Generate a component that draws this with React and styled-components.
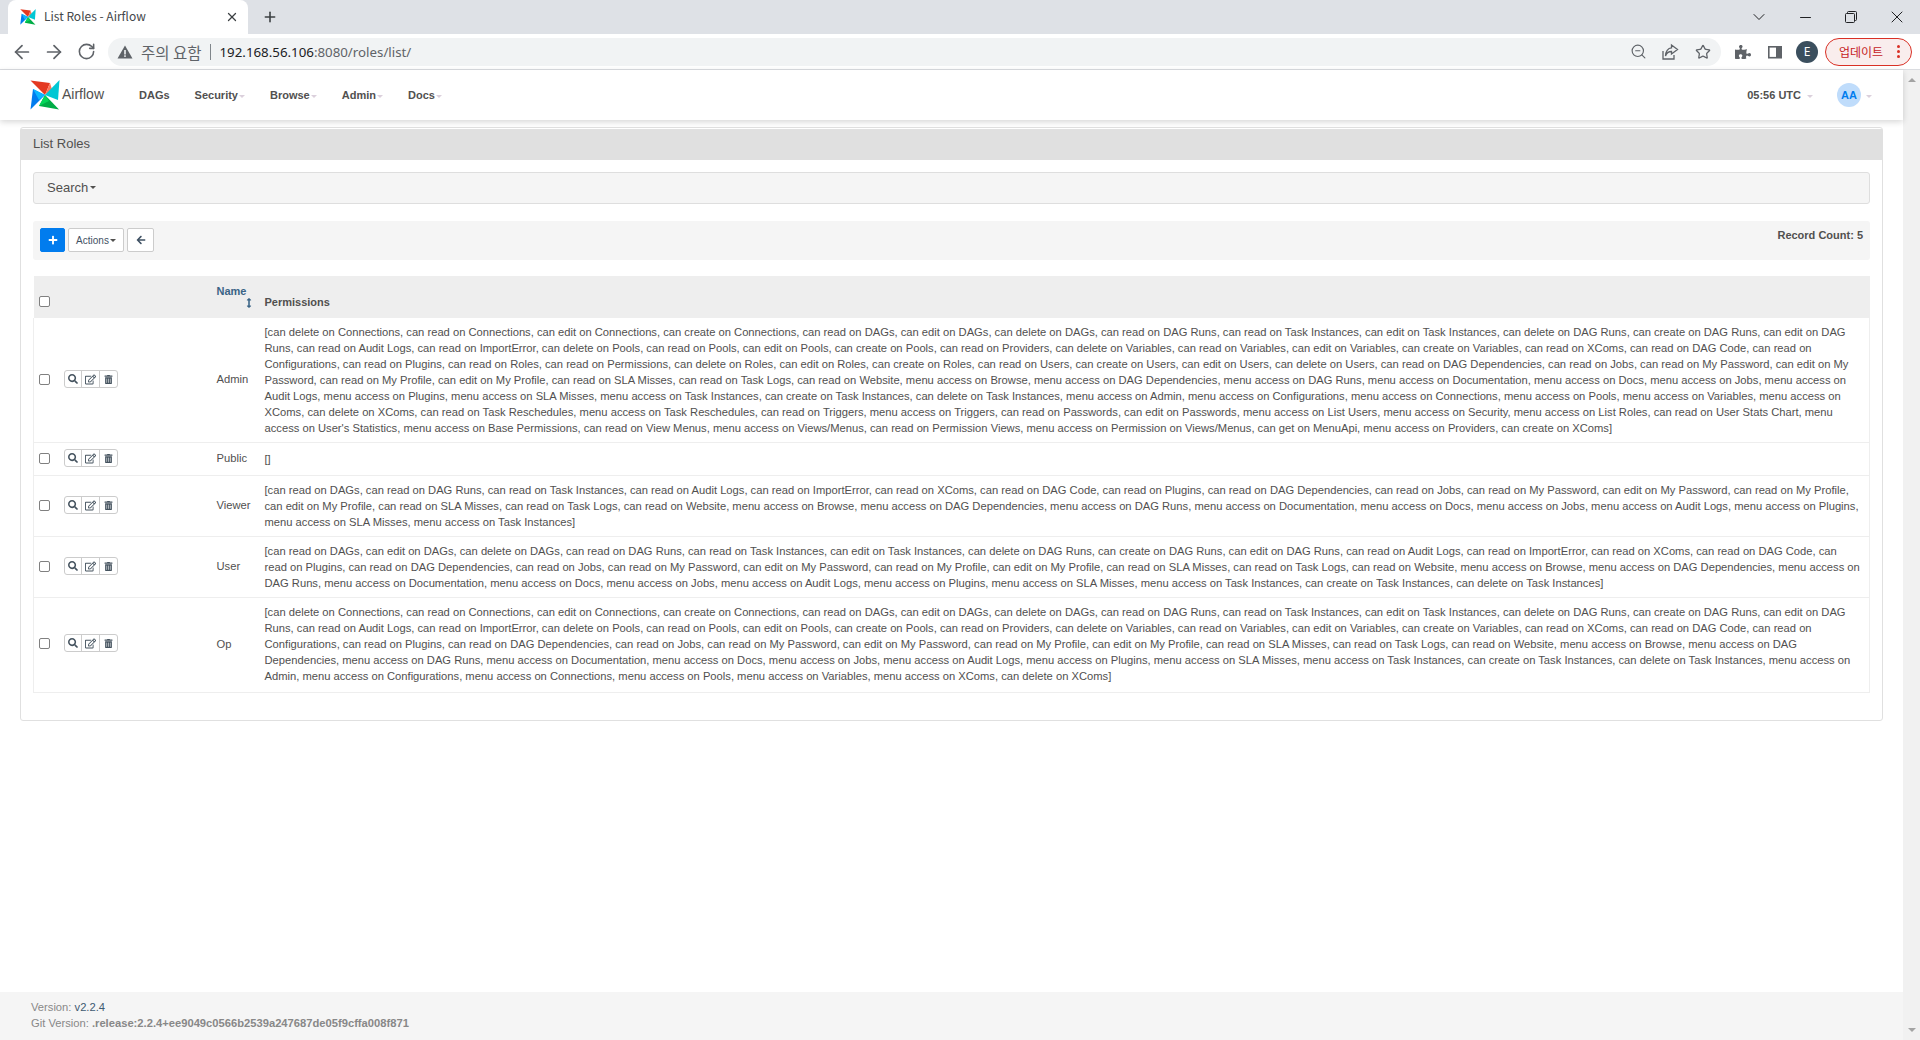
import React from "react";
import styled, { createGlobalStyle } from "styled-components";
import { ArrowLeft, ArrowRight, RotateCw, Star, ZoomOut, Plus, X, ChevronDown, Minus } from "lucide-react";
import { FaSearch, FaRegEdit, FaTrashAlt, FaPlus, FaArrowLeft, FaPuzzlePiece, FaArrowsAltV } from "react-icons/fa";

const Global = createGlobalStyle`
  html, body { margin: 0; padding: 0; height: 100%; background: #fff; overflow: hidden; }
  body { font-family: "Liberation Sans", Arial, sans-serif; color: #51504f; }
  * { box-sizing: border-box; }
`;

const Shell = styled.div`display:flex;flex-direction:column;width:1920px;height:1040px;overflow:hidden;`;
const TabStrip = styled.div`display:flex;align-items:stretch;height:34px;background:#dee1e6;padding-left:8px;flex:none;`;
const Tab = styled.div`display:flex;align-items:center;width:240px;background:#fff;border-radius:8px 8px 0 0;padding:0 9px 0 12px;`;
const TabTitle = styled.span`flex:1;margin:0 0 3px 8px;font:12px "Noto Sans CJK KR","Liberation Sans",sans-serif;color:#45474a;white-space:nowrap;`;
const NewTab = styled.div`display:flex;align-items:center;justify-content:center;width:28px;margin-left:8px;color:#3c4043;`;
const StripSpacer = styled.div`flex:1;`;
const WinBtn = styled.div`display:flex;align-items:center;justify-content:center;width:46px;color:#202124;`;

const Toolbar = styled.div`display:flex;align-items:center;height:36px;background:#fff;border-bottom:1px solid #dadce0;padding-left:6px;flex:none;`;
const ToolSlot = styled.div`display:flex;align-items:center;justify-content:center;width:${p => p.$w || 32}px;height:28px;margin-left:${p => p.$gap || 0}px;color:${p => p.$c || "#5f6368"};flex:none;`;
const Omnibox = styled.div`display:flex;align-items:center;flex:none;width:1613px;height:28px;margin-left:6px;background:#f1f3f4;border-radius:14px;padding:0 2px 0 9px;`;
const WarnText = styled.span`margin-left:8px;font:15.5px "Noto Sans CJK KR",sans-serif;color:#5f6368;white-space:nowrap;`;
const UrlSep = styled.span`width:1px;height:16px;background:#80868b;margin:0 9px 0 8px;`;
const Url = styled.span`flex:1;font:13.3px "Noto Sans","Liberation Sans",sans-serif;color:#5f6368;white-space:nowrap;b{font-weight:400;color:#202124;}`;
const ProfileDot = styled.div`display:flex;align-items:center;justify-content:center;width:22px;height:22px;border-radius:50%;background:#3b4f5e;color:#fff;font:12px "Noto Sans",sans-serif;`;
const UpdatePill = styled.div`display:flex;align-items:center;justify-content:space-between;width:87px;height:28px;margin-left:2px;border:1px solid #d93025;border-radius:14px;background:#f9eded;padding:0 11px 0 13px;font:12px "Noto Sans CJK KR",sans-serif;color:#c5221f;`;
const Dots = styled.span`display:flex;flex-direction:column;gap:2px;i{display:block;width:3px;height:3px;border-radius:50%;background:#d93025;}`;

const Viewport = styled.div`display:flex;flex:1;min-height:0;`;
const Page = styled.div`display:flex;flex-direction:column;flex:1;min-width:0;`;
const ScrollBar = styled.div`display:flex;flex-direction:column;justify-content:space-between;align-items:center;width:17px;background:#f1f1f1;padding:8px 0;flex:none;`;
const ScrollArrow = styled.span`width:0;height:0;border-left:4px solid transparent;border-right:4px solid transparent;${p => p.$down ? "border-top:4px solid #a3a3a3;" : "border-bottom:4px solid #a3a3a3;"}`;

const Navbar = styled.nav`display:flex;align-items:center;height:50px;padding:0 31px 0 30px;background:#fff;box-shadow:0 2px 6px rgba(0,0,0,.16);flex:none;position:relative;`;
const Brand = styled.div`display:flex;align-items:center;width:109px;flex:none;`;
const BrandName = styled.span`font-size:14px;color:#51504f;margin-left:2px;margin-bottom:2px;`;
const NavList = styled.div`display:flex;align-items:center;gap:25px;flex:1;`;
const NavItem = styled.span`display:flex;align-items:center;gap:1px;font-size:11px;font-weight:700;color:#51504f;`;
const Caret = styled.span`width:0;height:0;border-left:3px solid transparent;border-right:3px solid transparent;border-top:3px solid ${p => p.$c || "#dbd0dc"};margin-top:2px;`;
const Clock = styled.span`display:flex;align-items:center;gap:6px;font-size:11px;font-weight:700;color:#51504f;margin-right:24px;`;
const Avatar = styled.span`display:flex;align-items:center;justify-content:center;width:24px;height:24px;border-radius:50%;background:#bfdcfb;color:#017cee;font-size:11px;font-weight:700;margin-right:5px;`;

const Panel = styled.section`margin:7px 20px 0;height:594px;border:1px solid #e0e0e0;border-radius:3px;flex:none;`;
const PanelHead = styled.h1`margin:1px 0 0;height:31px;display:flex;align-items:center;padding:0 0 2px 12px;background:#e0e0e0;font-size:13px;font-weight:400;color:#51504f;`;
const PanelBody = styled.div`padding:12px 12px 0;`;
const SearchBar = styled.div`display:flex;align-items:center;gap:2px;height:32px;border:1px solid #dedede;border-radius:3px;background:#f5f5f5;padding:0 0 2px 13px;font-size:13px;color:#51504f;`;
const ActionBar = styled.div`display:flex;align-items:flex-start;justify-content:space-between;height:39px;margin-top:17px;padding:7px 7px 0;background:#f5f5f5;border-radius:3px;`;
const ActionGroup = styled.div`display:flex;gap:3px;`;
const Btn = styled.button`display:flex;align-items:center;justify-content:center;gap:1px;height:24px;width:${p => p.$w}px;padding:0;border:1px solid ${p => p.$primary ? "#017cee" : "#ccc"};border-radius:2px;background:${p => p.$primary ? "#017cee" : "#fff"};color:${p => p.$primary ? "#fff" : "#3f5163"};font:10px "Liberation Sans",sans-serif;`;
const TinyCaret = styled.span`width:0;height:0;border-left:3px solid transparent;border-right:3px solid transparent;border-top:3px solid #51504f;margin-top:1px;`;
const RecordCount = styled.span`font-size:11px;font-weight:700;color:#51504f;margin-top:1px;`;

const Table = styled.table`width:1837px;margin-top:16px;border-collapse:collapse;table-layout:fixed;font-size:11.2px;line-height:16px;color:#51504f;`;
const Th = styled.th`height:42px;padding:0 6px 8px;background:#eee;text-align:left;vertical-align:bottom;font-size:11px;font-weight:700;color:#51504f;`;
const CheckTh = styled(Th)`padding:8px 6px 0;vertical-align:middle;`;
const SortHead = styled.span`display:flex;flex-direction:column;margin-bottom:2px;a{color:#3a6486;line-height:14px;}svg{align-self:flex-end;color:#3a6486;margin-right:-1px;}`;
const Tr = styled.tr`border-bottom:1px solid #eee;&:last-child td{padding-bottom:8px;}`;
const Td = styled.td`padding:6px;vertical-align:middle;white-space:nowrap;&:first-child{border-left:1px solid #eee;}&:last-child{border-right:1px solid #eee;}`;
const NameTd = styled(Td)`padding-bottom:8px;`;
const Check = styled.input.attrs({ type: "checkbox" })`appearance:none;display:block;width:11px;height:11px;margin:0 0 ${p => p.$lift || 0}px -1px;border:1px solid #808080;border-radius:2px;background:#fff;`;
const RowButtons = styled.div`display:flex;width:54px;height:18px;margin-bottom:2px;border:1px solid #ccc;border-radius:3px;`;
const RowBtn = styled.span`display:flex;align-items:center;justify-content:center;flex:1;color:#45535f;&+&{border-left:1px solid #ccc;}`;
const PermLine = styled.span`display:block;`;

const Footer = styled.footer`margin-top:auto;height:48px;display:flex;flex-direction:column;justify-content:center;padding:0 0 2px 31px;background:#f5f5f5;font-size:11.2px;line-height:16px;color:#888;b{font-weight:400;color:#3f5a72;}strong{font-weight:700;}`;

const Logo = ({ s = 30 }) => (
  <svg width={s} height={s} viewBox="0 0 30 30">
    <path d="M0.5 0.5 L20 3 L15 15 Z" fill="#e43921" />
    <path d="M20 3 L22 9.5 L15 15 Z" fill="#ff7557" />
    <path d="M29.5 0 L28 20 L15 15 Z" fill="#00c7d4" />
    <path d="M29.5 0 L21 9 L15 15 Z" fill="#11e1ee" />
    <path d="M29 29.5 L9 26 L15 15 Z" fill="#00ad46" />
    <path d="M9 26 L19 21 L15 15 Z" fill="#04d659" />
    <path d="M0.5 29.5 L3 9 L15 15 Z" fill="#017cee" />
    <path d="M3 9 L9 20 L15 15 Z" fill="#0cb6ff" />
  </svg>
);

const Warn = () => (
  <svg width="16" height="16" viewBox="0 0 16 16"><path d="M8 1.5 L15.5 14.5 H0.5 Z" fill="#5f6368" /><rect x="7.2" y="6" width="1.6" height="4.5" fill="#f1f3f4" /><rect x="7.2" y="11.3" width="1.6" height="1.6" fill="#f1f3f4" /></svg>
);
const ShareIcon = () => (
  <svg width="18" height="18" viewBox="0 0 18 18" fill="none" stroke="#5f6368" strokeWidth="1.3"><path d="M2 8 V16 H13 V12" /><path d="M10.5 2 L16.5 6.5 L10.5 11 V8.5 C7.5 8.5 5.5 10 4.5 13 C4.5 8.5 7 5 10.5 4.8 Z" /></svg>
);
const SidePanel = () => (
  <svg width="16" height="16" viewBox="0 0 16 16"><rect x="1" y="2" width="14" height="12.5" fill="#5f6368" /><rect x="2.6" y="3.6" width="6.4" height="9.3" fill="#fff" /></svg>
);
const Restore = () => (
  <svg width="12" height="12" viewBox="0 0 12 12" fill="none" stroke="#202124"><rect x="0.5" y="2.5" width="9" height="9" rx="1" /><path d="M2.5 2.5 V1.5 a1 1 0 0 1 1-1 H10.5 a1 1 0 0 1 1 1 V8.5 a1 1 0 0 1 -1 1 H9.5" /></svg>
);

const L1 = "[can delete on Connections, can read on Connections, can edit on Connections, can create on Connections, can read on DAGs, can edit on DAGs, can delete on DAGs, can read on DAG Runs, can read on Task Instances, can edit on Task Instances, can delete on DAG Runs, can create on DAG Runs, can edit on DAG";
const L2 = "Runs, can read on Audit Logs, can read on ImportError, can delete on Pools, can read on Pools, can edit on Pools, can create on Pools, can read on Providers, can delete on Variables, can read on Variables, can edit on Variables, can create on Variables, can read on XComs, can read on DAG Code, can read on";

const roles = [
  { name: "Admin", lines: [L1, L2,
    "Configurations, can read on Plugins, can read on Roles, can read on Permissions, can delete on Roles, can edit on Roles, can create on Roles, can read on Users, can create on Users, can edit on Users, can delete on Users, can read on DAG Dependencies, can read on Jobs, can read on My Password, can edit on My",
    "Password, can read on My Profile, can edit on My Profile, can read on SLA Misses, can read on Task Logs, can read on Website, menu access on Browse, menu access on DAG Dependencies, menu access on DAG Runs, menu access on Documentation, menu access on Docs, menu access on Jobs, menu access on",
    "Audit Logs, menu access on Plugins, menu access on SLA Misses, menu access on Task Instances, can create on Task Instances, can delete on Task Instances, menu access on Admin, menu access on Configurations, menu access on Connections, menu access on Pools, menu access on Variables, menu access on",
    "XComs, can delete on XComs, can read on Task Reschedules, menu access on Task Reschedules, can read on Triggers, menu access on Triggers, can read on Passwords, can edit on Passwords, menu access on List Users, menu access on Security, menu access on List Roles, can read on User Stats Chart, menu",
    "access on User's Statistics, menu access on Base Permissions, can read on View Menus, menu access on Views/Menus, can read on Permission Views, menu access on Permission on Views/Menus, can get on MenuApi, menu access on Providers, can create on XComs]"] },
  { name: "Public", lines: ["[]"] },
  { name: "Viewer", lines: [
    "[can read on DAGs, can read on DAG Runs, can read on Task Instances, can read on Audit Logs, can read on ImportError, can read on XComs, can read on DAG Code, can read on Plugins, can read on DAG Dependencies, can read on Jobs, can read on My Password, can edit on My Password, can read on My Profile,",
    "can edit on My Profile, can read on SLA Misses, can read on Task Logs, can read on Website, menu access on Browse, menu access on DAG Dependencies, menu access on DAG Runs, menu access on Documentation, menu access on Docs, menu access on Jobs, menu access on Audit Logs, menu access on Plugins,",
    "menu access on SLA Misses, menu access on Task Instances]"] },
  { name: "User", lines: [
    "[can read on DAGs, can edit on DAGs, can delete on DAGs, can read on DAG Runs, can read on Task Instances, can edit on Task Instances, can delete on DAG Runs, can create on DAG Runs, can edit on DAG Runs, can read on Audit Logs, can read on ImportError, can read on XComs, can read on DAG Code, can",
    "read on Plugins, can read on DAG Dependencies, can read on Jobs, can read on My Password, can edit on My Password, can read on My Profile, can edit on My Profile, can read on SLA Misses, can read on Task Logs, can read on Website, menu access on Browse, menu access on DAG Dependencies, menu access on",
    "DAG Runs, menu access on Documentation, menu access on Docs, menu access on Jobs, menu access on Audit Logs, menu access on Plugins, menu access on SLA Misses, menu access on Task Instances, can create on Task Instances, can delete on Task Instances]"] },
  { name: "Op", lines: [L1, L2,
    "Configurations, can read on Plugins, can read on DAG Dependencies, can read on Jobs, can read on My Password, can edit on My Password, can read on My Profile, can edit on My Profile, can read on SLA Misses, can read on Task Logs, can read on Website, menu access on Browse, menu access on DAG",
    "Dependencies, menu access on DAG Runs, menu access on Documentation, menu access on Docs, menu access on Jobs, menu access on Audit Logs, menu access on Plugins, menu access on SLA Misses, menu access on Task Instances, can create on Task Instances, can delete on Task Instances, menu access on",
    "Admin, menu access on Configurations, menu access on Connections, menu access on Pools, menu access on Variables, menu access on XComs, can delete on XComs]"] },
];

const navItems = ["Security", "Browse", "Admin", "Docs"];

export default function App() {
  return (
    <Shell>
      <Global />
      <TabStrip>
        <Tab>
          <Logo s={16} />
          <TabTitle>List Roles - Airflow</TabTitle>
          <X size={14} color="#3c4043" strokeWidth={2.2} />
        </Tab>
        <NewTab><Plus size={16} strokeWidth={2.4} /></NewTab>
        <StripSpacer />
        <WinBtn><ChevronDown size={20} strokeWidth={1.2} /></WinBtn>
        <WinBtn><Minus size={17} strokeWidth={1.5} /></WinBtn>
        <WinBtn><Restore /></WinBtn>
        <WinBtn><X size={20} strokeWidth={1.2} /></WinBtn>
      </TabStrip>
      <Toolbar>
        <ToolSlot><ArrowLeft size={22} strokeWidth={1.9} /></ToolSlot>
        <ToolSlot><ArrowRight size={22} strokeWidth={1.9} /></ToolSlot>
        <ToolSlot><RotateCw size={19} strokeWidth={2} /></ToolSlot>
        <Omnibox>
          <Warn />
          <WarnText>주의 요함</WarnText>
          <UrlSep />
          <Url><b>192.168.56.106</b>:8080/roles/list/</Url>
          <ToolSlot $w={31}><ZoomOut size={17} strokeWidth={1.6} /></ToolSlot>
          <ToolSlot $w={32}><ShareIcon /></ToolSlot>
          <ToolSlot $w={33}><Star size={16} strokeWidth={1.9} /></ToolSlot>
        </Omnibox>
        <ToolSlot $gap={6}><FaPuzzlePiece size={16} /></ToolSlot>
        <ToolSlot><SidePanel /></ToolSlot>
        <ToolSlot><ProfileDot>E</ProfileDot></ToolSlot>
        <UpdatePill>업데이트<Dots><i /><i /><i /></Dots></UpdatePill>
      </Toolbar>
      <Viewport>
        <Page>
          <Navbar>
            <Brand><Logo /><BrandName>Airflow</BrandName></Brand>
            <NavList>
              <NavItem>DAGs</NavItem>
              {navItems.map(n => <NavItem key={n}>{n}<Caret /></NavItem>)}
            </NavList>
            <Clock>05:56 UTC<Caret /></Clock>
            <Avatar>AA</Avatar>
            <Caret />
          </Navbar>
          <Panel>
            <PanelHead>List Roles</PanelHead>
            <PanelBody>
              <SearchBar>Search<TinyCaret /></SearchBar>
              <ActionBar>
                <ActionGroup>
                  <Btn $w={25} $primary><FaPlus size={10} /></Btn>
                  <Btn $w={56}>Actions<TinyCaret /></Btn>
                  <Btn $w={27}><FaArrowLeft size={10} /></Btn>
                </ActionGroup>
                <RecordCount>Record Count: 5</RecordCount>
              </ActionBar>
              <Table>
                <colgroup>
                  <col style={{ width: 24 }} />
                  <col style={{ width: 153 }} />
                  <col style={{ width: 48 }} />
                  <col />
                </colgroup>
                <thead>
                  <tr>
                    <CheckTh><Check /></CheckTh>
                    <Th />
                    <Th><SortHead><a>Name</a><FaArrowsAltV size={10} /></SortHead></Th>
                    <Th>Permissions</Th>
                  </tr>
                </thead>
                <tbody>
                  {roles.map(r => (
                    <Tr key={r.name}>
                      <Td><Check $lift={2} /></Td>
                      <Td>
                        <RowButtons>
                          <RowBtn><FaSearch size={10} /></RowBtn>
                          <RowBtn><FaRegEdit size={11} /></RowBtn>
                          <RowBtn><FaTrashAlt size={9} /></RowBtn>
                        </RowButtons>
                      </Td>
                      <NameTd>{r.name}</NameTd>
                      <Td>{r.lines.map((l, i) => <PermLine key={i}>{l}</PermLine>)}</Td>
                    </Tr>
                  ))}
                </tbody>
              </Table>
            </PanelBody>
          </Panel>
          <Footer>
            <span>Version: <b>v2.2.4</b></span>
            <span>Git Version: <strong>.release:2.2.4+ee9049c0566b2539a247687de05f9cffa008f871</strong></span>
          </Footer>
        </Page>
        <ScrollBar><ScrollArrow /><ScrollArrow $down /></ScrollBar>
      </Viewport>
    </Shell>
  );
}
